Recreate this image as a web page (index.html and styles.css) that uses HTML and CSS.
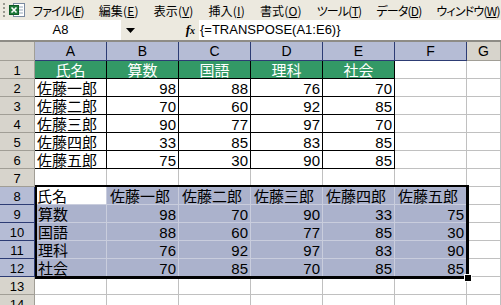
FILE: index.html
```html
<!DOCTYPE html>
<html lang="ja">
<head>
<meta charset="utf-8">
<title>TRANSPOSE</title>
<link rel="stylesheet" href="styles.css">
</head>
<body>
<div class="app">
  <div class="menubar">
    <span class="grip"></span>
    <svg class="xlicon" width="17" height="16" viewBox="0 0 17 16">
      <rect x="4.5" y="1.5" width="11" height="13" fill="#fff" stroke="#7a8aa0"/>
      <line x1="8" y1="5" x2="14" y2="5" stroke="#9ab" />
      <line x1="8" y1="8" x2="14" y2="8" stroke="#9ab" />
      <line x1="8" y1="11" x2="14" y2="11" stroke="#9ab" />
      <rect x="0.5" y="3.5" width="9" height="9" fill="#1f7a3a" stroke="#0e5a25"/>
      <path d="M2.5 5.5 L7.5 10.5 M7.5 5.5 L2.5 10.5" stroke="#fff" stroke-width="1.6"/>
    </svg>
    <span class="mi k">ファイル(<u>F</u>)</span>
    <span class="mi">編集(<u>E</u>)</span>
    <span class="mi">表示(<u>V</u>)</span>
    <span class="mi">挿入(<u>I</u>)</span>
    <span class="mi">書式(<u>O</u>)</span>
    <span class="mi k">ツール(<u>T</u>)</span>
    <span class="mi k">データ(<u>D</u>)</span>
    <span class="mi k">ウィンドウ(<u>W</u>)</span>
  </div>
  <div class="fbar">
    <div class="namebox">A8</div>
    <div class="dd"><svg width="9" height="5" viewBox="0 0 9 5"><path d="M0 0 H9 L4.5 5 Z" fill="#000"/></svg></div>
    <div class="fx">f<span class="fxx">x</span></div>
    <div class="formula">{=TRANSPOSE(A1:E6)}</div>
  </div>
  <div class="sheet">
    <div class="c h corner"></div>
    <div class="c h hs">A</div><div class="c h hs">B</div><div class="c h hs">C</div><div class="c h hs">D</div><div class="c h hs">E</div><div class="c h hs">F</div><div class="c h hg">G</div>

    <div class="c r">1</div>
    <div class="c t g">氏名</div><div class="c t g">算数</div><div class="c t g">国語</div><div class="c t g">理科</div><div class="c t g">社会</div><div class="c"></div><div class="c"></div>

    <div class="c r">2</div>
    <div class="c t">佐藤一郎</div><div class="c t n">98</div><div class="c t n">88</div><div class="c t n">76</div><div class="c t n">70</div><div class="c"></div><div class="c"></div>

    <div class="c r">3</div>
    <div class="c t">佐藤二郎</div><div class="c t n">70</div><div class="c t n">60</div><div class="c t n">92</div><div class="c t n">85</div><div class="c"></div><div class="c"></div>

    <div class="c r">4</div>
    <div class="c t">佐藤三郎</div><div class="c t n">90</div><div class="c t n">77</div><div class="c t n">97</div><div class="c t n">70</div><div class="c"></div><div class="c"></div>

    <div class="c r">5</div>
    <div class="c t">佐藤四郎</div><div class="c t n">33</div><div class="c t n">85</div><div class="c t n">83</div><div class="c t n">85</div><div class="c"></div><div class="c"></div>

    <div class="c r">6</div>
    <div class="c t">佐藤五郎</div><div class="c t n">75</div><div class="c t n">30</div><div class="c t n">90</div><div class="c t n">85</div><div class="c"></div><div class="c"></div>

    <div class="c r">7</div>
    <div class="c"></div><div class="c"></div><div class="c"></div><div class="c"></div><div class="c"></div><div class="c"></div><div class="c"></div>

    <div class="c r rs">8</div>
    <div class="c act">氏名</div><div class="c s">佐藤一郎</div><div class="c s">佐藤二郎</div><div class="c s">佐藤三郎</div><div class="c s">佐藤四郎</div><div class="c s">佐藤五郎</div><div class="c"></div>

    <div class="c r rs">9</div>
    <div class="c s">算数</div><div class="c s n">98</div><div class="c s n">70</div><div class="c s n">90</div><div class="c s n">33</div><div class="c s n">75</div><div class="c"></div>

    <div class="c r rs">10</div>
    <div class="c s">国語</div><div class="c s n">88</div><div class="c s n">60</div><div class="c s n">77</div><div class="c s n">85</div><div class="c s n">30</div><div class="c"></div>

    <div class="c r rs">11</div>
    <div class="c s">理科</div><div class="c s n">76</div><div class="c s n">92</div><div class="c s n">97</div><div class="c s n">83</div><div class="c s n">90</div><div class="c"></div>

    <div class="c r rs">12</div>
    <div class="c s">社会</div><div class="c s n">70</div><div class="c s n">85</div><div class="c s n">70</div><div class="c s n">85</div><div class="c s n">85</div><div class="c"></div>

    <div class="c r">13</div>
    <div class="c"></div><div class="c"></div><div class="c"></div><div class="c"></div><div class="c"></div><div class="c"></div><div class="c"></div>

    <div class="c r">14</div>
    <div class="c"></div><div class="c"></div><div class="c"></div><div class="c"></div><div class="c"></div><div class="c"></div><div class="c"></div>

    <div class="selbox"><span class="handle"></span></div>
  </div>
</div>
</body>
</html>
```
FILE: styles.css
```css
html, body {
  margin: 0;
  padding: 0;
  background: #fff;
}
.app {
  width: 501px;
  height: 305px;
  overflow: hidden;
  font-family: "Liberation Sans", "Noto Sans CJK JP", sans-serif;
}
.menubar {
  height: 20px;
  background: #ece9df;
  display: flex;
  align-items: center;
  font-family: "Noto Sans CJK JP", sans-serif;
  font-size: 12px;
  font-feature-settings: "palt";
  color: #000;
  white-space: nowrap;
  overflow: hidden;
}
.menubar > * {
  flex-shrink: 0;
}
.grip {
  width: 2px;
  height: 14px;
  margin-left: 3px;
  background: repeating-linear-gradient(#9a9a90 0 2px, transparent 2px 4px);
}
.xlicon {
  margin-left: 4px;
  margin-right: 7px;
}
.mi {
  margin-right: 15px;
  letter-spacing: 0.15px;
}
.mi.k {
  letter-spacing: -0.8px;
}
.mi u {
  text-underline-offset: 1px;
}
.fbar {
  height: 20px;
  display: flex;
  background: #ece9df;
  border-bottom: 2px solid #8e8c86;
  font-size: 13px;
}
.namebox {
  width: 121px;
  background: #fff;
  text-align: center;
  line-height: 20px;
  box-sizing: border-box;
}
.dd {
  width: 18px;
  display: flex;
  align-items: center;
  justify-content: center;
  padding-top: 1px;
}
.fx {
  width: 60px;
  text-align: right;
  padding-right: 4px;
  box-sizing: border-box;
  font-family: "Liberation Serif", serif;
  font-style: italic;
  font-weight: bold;
  font-size: 13px;
  line-height: 20px;
}
.fxx {
  font-size: 10px;
}
.formula {
  flex: 1;
  background: #fff;
  line-height: 20px;
  padding-left: 1px;
  white-space: nowrap;
}
.sheet {
  position: relative;
  display: grid;
  grid-template-columns: 35px repeat(6, 72px) 1fr;
  grid-template-rows: 19px repeat(14, 18px);
}
.c {
  box-sizing: border-box;
  border-right: 1px solid #c0c0c0;
  border-bottom: 1px solid #c0c0c0;
  overflow: hidden;
  white-space: nowrap;
  font-size: 15px;
  line-height: 18px;
  padding: 1px 2px 0;
  color: #000;
}
.n {
  text-align: right;
  padding-right: 2px;
}
.h {
  background: #d7d4cc;
  border-color: #a19e96;
  text-align: center;
  font-size: 14px;
  line-height: 19px;
  padding: 0;
}
.hs {
  background: #b5bcd5;
  border-right-color: #2d3c74;
  border-bottom-color: #2d3c74;
}
.hg {
  background: #d7d4cc;
}
.r {
  background: #d7d4cc;
  border-color: #a19e96;
  text-align: center;
  font-size: 13px;
  padding: 0;
  line-height: 19px;
}
.rs {
  background: #b5bcd5;
  border-right-color: #2d3c74;
  border-bottom-color: #2d3c74;
}
.t {
  border-color: #000;
}
.g {
  background: #339966;
  color: #fff;
  text-align: center;
}
.s {
  background: #abb2cc;
  border-color: #c9cddd;
}
.act {
  background: #fff;
  border-color: #c9cddd;
}
.s:not(.n) {
  padding-left: 3px;
}
.selbox {
  position: absolute;
  grid-column: 2 / 8;
  grid-row: 9 / 14;
  top: -2px;
  left: 0;
  right: -2px;
  bottom: -2px;
  border: 2px solid #000;
  border-right-width: 3px;
  border-bottom-width: 3px;
  pointer-events: none;
}
.handle {
  position: absolute;
  right: -6px;
  bottom: -6px;
  width: 6px;
  height: 6px;
  background: #000;
  border: 1px solid #fff;
}
```
